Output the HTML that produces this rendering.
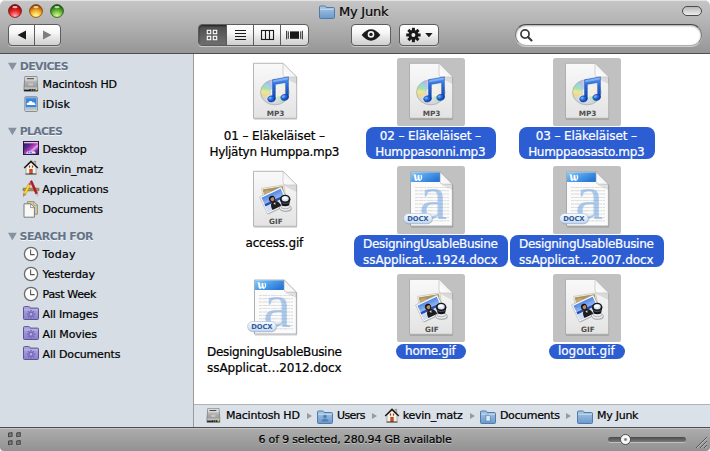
<!DOCTYPE html><html><head><meta charset="utf-8"><title>My Junk</title><style>

html,body{margin:0;padding:0;background:#fff;}
body{width:710px;height:451px;overflow:hidden;position:relative;font-family:"DejaVu Sans","Liberation Sans",sans-serif;color:#000;}
*{box-sizing:border-box;}
#win{position:absolute;left:0;top:0;width:710px;height:451px;overflow:hidden;border-radius:5px 5px 4px 4px;background:#fff;}
#tb{position:absolute;left:0;top:0;width:710px;height:54px;background:linear-gradient(#cbcbcb 0px,#c4c4c4 2px,#b4b4b4 22px,#969696 53px);border-bottom:1px solid #4e4e4e;box-shadow:inset 0 1px 0 #e2e2e2;border-radius:5px 5px 0 0;}
.tl{position:absolute;top:4px;width:14px;height:14px;}
#title{position:absolute;top:3px;-webkit-text-stroke:0.22px #000;left:338.9px;font-size:13px;line-height:18px;white-space:nowrap;text-shadow:0 1px 0 rgba(255,255,255,.45);}
#tfolder{position:absolute;left:319px;top:4px;}
.btn{position:absolute;top:24px;height:22px;border:1px solid #5c5c5c;border-radius:4px;background:linear-gradient(#ffffff 0%,#f6f6f6 40%,#e6e6e6 62%,#cfcfcf 100%);box-shadow:0 1px 0 rgba(255,255,255,.45);}
#loz{position:absolute;left:682px;top:6px;width:20px;height:10px;border:1px solid #4c4c4c;border-radius:5px;background:linear-gradient(#b8b8b8,#eeeeee);}
#search{position:absolute;left:515px;top:24px;width:187px;height:22px;border-radius:11px;background:#fff;border:1px solid #7c7c7c;border-top-color:#474747;border-bottom-color:#b0b0b0;box-shadow:inset 0 1px 2px rgba(0,0,0,.35),0 1px 0 rgba(255,255,255,.5);}
#side{position:absolute;left:0;top:54px;width:193px;height:373px;background:#d6dde5;}
#sdiv{position:absolute;left:193px;top:54px;width:1px;height:373px;background:#9a9a9a;}
.sh{position:absolute;margin-top:1px;left:20.5px;font-size:11px;font-weight:bold;color:#647387;line-height:14px;letter-spacing:-0.5px;text-shadow:0 1px 0 rgba(255,255,255,.7);white-space:nowrap;}
.tri{position:absolute;left:8px;}
.si{position:absolute;margin-top:1px;-webkit-text-stroke:0.22px #000;left:43.5px;font-size:11px;line-height:14px;letter-spacing:-0.25px;white-space:nowrap;}
.sic{position:absolute;}
#content{position:absolute;left:194px;top:54px;width:516px;height:350px;background:#fff;}
.big{position:absolute;}
.ext{font-family:"DejaVu Sans","Liberation Sans",sans-serif;font-weight:bold;font-size:7.3px;fill:#4e4e4e;}
.docx{font-family:"DejaVu Sans","Liberation Sans",sans-serif;font-weight:bold;font-size:6.8px;fill:#31599a;letter-spacing:-0.1px;}
.biga{font-family:"Liberation Serif","DejaVu Serif",serif;font-size:63px;fill:#9cc2ee;opacity:.85;}
.lab{position:absolute;width:200px;text-align:center;font-size:12px;line-height:16px;white-space:nowrap;}
.lab span{display:inline-block;padding:0 10.3px 0 8.9px;border-radius:8px;-webkit-text-stroke:0.22px currentColor;}
.lab b{font-weight:normal;display:block;position:relative;top:1px;height:16px;}
.lab.one span{margin-top:1px;}
.lab.one b{top:0;height:15px;line-height:15px;}
.lab.sel span{background:#2c5dd3;color:#fff;}
#path{position:absolute;left:194px;top:404px;width:516px;height:23px;background:#dbe1e8;border-top:1px solid #b4b4b4;}
.pt{position:absolute;top:409px;-webkit-text-stroke:0.22px #000;font-size:11px;line-height:14px;letter-spacing:-0.25px;white-space:nowrap;}
.pi{position:absolute;}
.pa{position:absolute;top:413px;width:0;height:0;border-left:5px solid #9a9a9a;border-top:3px solid transparent;border-bottom:3px solid transparent;}
#status{position:absolute;left:0;top:427px;width:710px;height:24px;background:linear-gradient(#adadad,#929292);border-top:1px solid #4e4e4e;box-shadow:inset 0 1px 0 #c4c4c4;}
#stxt{position:absolute;-webkit-text-stroke:0.2px #000;left:0;top:433px;width:710px;text-align:center;font-size:11px;line-height:14px;letter-spacing:-0.2px;text-shadow:0 1px 0 rgba(255,255,255,.4);white-space:nowrap;}

</style></head><body>

<svg width="0" height="0" style="position:absolute;left:0;top:0">
<defs>
<linearGradient id="gPage" x1="0" y1="0" x2="0" y2="1"><stop offset="0" stop-color="#f9f9f9"/><stop offset="1" stop-color="#e3e3e3"/></linearGradient>
<linearGradient id="gFoldc" x1="0" y1="1" x2="1" y2="0"><stop offset="0" stop-color="#ffffff"/><stop offset="0.5" stop-color="#f4f4f4"/><stop offset="1" stop-color="#c9c9c9"/></linearGradient>
<linearGradient id="gFolder" x1="0" y1="0" x2="0" y2="1"><stop offset="0" stop-color="#a9c7e5"/><stop offset="1" stop-color="#6a99ca"/></linearGradient>
<linearGradient id="gSmart" x1="0" y1="0" x2="0" y2="1"><stop offset="0" stop-color="#b0a9e0"/><stop offset="1" stop-color="#8a80c8"/></linearGradient>
<linearGradient id="gNote" x1="0" y1="0" x2="0" y2="1"><stop offset="0" stop-color="#5a9af4"/><stop offset="0.45" stop-color="#2468dc"/><stop offset="1" stop-color="#1248b4"/></linearGradient>
<linearGradient id="gHD" x1="0" y1="0" x2="0" y2="1"><stop offset="0" stop-color="#d8d8d8"/><stop offset="0.5" stop-color="#a9a9a9"/><stop offset="1" stop-color="#8c8c8c"/></linearGradient>
<linearGradient id="gDocHead" x1="0" y1="0" x2="1" y2="0.6"><stop offset="0" stop-color="#86ccf8"/><stop offset="0.5" stop-color="#4f9fea"/><stop offset="1" stop-color="#2a76d6"/></linearGradient>
<linearGradient id="gPill" x1="0" y1="0" x2="0" y2="1"><stop offset="0" stop-color="#ffffff"/><stop offset="1" stop-color="#c4d9f2"/></linearGradient>
<linearGradient id="gDesk" x1="0" y1="0" x2="1" y2="1"><stop offset="0" stop-color="#22164a"/><stop offset="0.34" stop-color="#5a2c8e"/><stop offset="0.54" stop-color="#c244c4"/><stop offset="0.63" stop-color="#f2a6ea"/><stop offset="0.76" stop-color="#7a3aa4"/><stop offset="1" stop-color="#2a1852"/></linearGradient>
<radialGradient id="gCD" cx="0.5" cy="0.5" r="0.5"><stop offset="0" stop-color="#f6f6f6"/><stop offset="0.3" stop-color="#e6e8ea"/><stop offset="1" stop-color="#cfd3d8"/></radialGradient>
<radialGradient id="gRed" cx="0.5" cy="0.92" r="0.85"><stop offset="0" stop-color="#ffc4c4"/><stop offset="0.22" stop-color="#fa7a7a"/><stop offset="0.55" stop-color="#e82424"/><stop offset="1" stop-color="#7e0c0c"/></radialGradient>
<radialGradient id="gYel" cx="0.5" cy="0.92" r="0.85"><stop offset="0" stop-color="#fff6a0"/><stop offset="0.25" stop-color="#fde56a"/><stop offset="0.6" stop-color="#f0a020"/><stop offset="1" stop-color="#8a4206"/></radialGradient>
<radialGradient id="gGrn" cx="0.5" cy="0.92" r="0.85"><stop offset="0" stop-color="#dcf8a6"/><stop offset="0.25" stop-color="#aee26a"/><stop offset="0.6" stop-color="#58ae34"/><stop offset="1" stop-color="#1c560e"/></radialGradient>
<radialGradient id="gHead" cx="0.35" cy="0.3" r="0.8"><stop offset="0" stop-color="#7fbcff"/><stop offset="0.45" stop-color="#1f66de"/><stop offset="1" stop-color="#0a3496"/></radialGradient>
<clipPath id="cdclip"><ellipse cx="33.8" cy="34.3" rx="14.3" ry="12.6"/></clipPath>
<filter id="blur1" x="-20%" y="-20%" width="140%" height="140%"><feGaussianBlur stdDeviation="0.9"/></filter>
<linearGradient id="gSky" x1="0" y1="0" x2="0" y2="1"><stop offset="0" stop-color="#4f86e4"/><stop offset="0.5" stop-color="#9dbdf2"/><stop offset="1" stop-color="#9dbdf2"/></linearGradient>
</defs></svg>

<div id="win">
<div id="tb"></div>
<svg class="tl" style="left:8px" width="14" height="14" viewBox="0 0 14 14"><circle cx="7" cy="7" r="6.4" fill="url(#gRed)" stroke="#7a1414" stroke-width="0.9"/><ellipse cx="7" cy="3.1" rx="2.6" ry="1.2" fill="#fff" opacity=".7"/></svg>
<svg class="tl" style="left:29px" width="14" height="14" viewBox="0 0 14 14"><circle cx="7" cy="7" r="6.4" fill="url(#gYel)" stroke="#8a4a0a" stroke-width="0.9"/><ellipse cx="7" cy="3.1" rx="2.6" ry="1.2" fill="#fff" opacity=".7"/></svg>
<svg class="tl" style="left:50px" width="14" height="14" viewBox="0 0 14 14"><circle cx="7" cy="7" r="6.4" fill="url(#gGrn)" stroke="#255c16" stroke-width="0.9"/><ellipse cx="7" cy="3.1" rx="2.6" ry="1.2" fill="#fff" opacity=".7"/></svg>
<div id="tfolder"><svg width="16" height="14" viewBox="0 0 16 14"><path d="M0.5 2 q0-1 1-1 h4.2 q0.8 0 1.1 0.7 l0.3 0.8 h7.4 q1 0 1 1 v9 q0 1-1 1 h-13 q-1 0-1-1z" fill="url(#gFolder)" stroke="#4f7cac" stroke-width="1"/><path d="M1.2 4.3 h13.6" stroke="#d3e4f4" stroke-width="0.8"/></svg></div>
<div id="title" style="letter-spacing:-0.215px">My Junk</div>
<div id="loz"></div>
<div class="btn" style="left:8px;width:53px"></div>
<div style="position:absolute;left:34px;top:25px;width:1px;height:20px;background:#5c5c5c"></div>
<svg style="position:absolute;left:8px;top:24px" width="53" height="22" viewBox="0 0 53 22"><path d="M9.5 11 L18 6.6 V15.4Z" fill="#1a1a1a"/><path d="M43.5 11 L35 6.6 V15.4Z" fill="#7e7e7e"/></svg>
<div class="btn" style="left:198px;width:111px"></div>
<div style="position:absolute;left:199px;top:25px;width:28px;height:20px;border-radius:3px 0 0 3px;background:linear-gradient(#4a4a4a,#636363 60%,#6e6e6e);box-shadow:inset 0 1px 2px rgba(0,0,0,.6)"></div>
<div style="position:absolute;left:226px;top:25px;width:1px;height:20px;background:#5c5c5c"></div>
<div style="position:absolute;left:253px;top:25px;width:1px;height:20px;background:#5c5c5c"></div>
<div style="position:absolute;left:280px;top:25px;width:1px;height:20px;background:#5c5c5c"></div>
<svg style="position:absolute;left:198px;top:24px" width="111" height="22" viewBox="0 0 111 22"><g fill="none" stroke="#fff" stroke-width="1.1"><rect x="9.3" y="6.3" width="3.4" height="3.4"/><rect x="15.3" y="6.3" width="3.4" height="3.4"/><rect x="9.3" y="12.3" width="3.4" height="3.4"/><rect x="15.3" y="12.3" width="3.4" height="3.4"/></g><g stroke="#1a1a1a" stroke-width="1.1"><path d="M37 6.5 h11 M37 9.5 h11 M37 12.5 h11 M37 15.5 h11"/></g><g fill="none" stroke="#1a1a1a" stroke-width="1.1"><rect x="63.5" y="6.5" width="12" height="9"/><path d="M67.5 6.5 v9 M71.5 6.5 v9"/></g><g><rect x="92" y="7.4" width="9" height="7.4" fill="#1a1a1a"/><path d="M88.6 6.8 v8.6 M90.3 7.4 v7.4 M102.7 7.4 v7.4 M104.4 6.8 v8.6" stroke="#1a1a1a" stroke-width="0.9"/></g></svg>
<div class="btn" style="left:351px;width:40px"></div>
<svg style="position:absolute;left:351px;top:24px" width="40" height="22" viewBox="0 0 40 22"><path d="M10.6 11 Q20 -0.4 29.4 11 Q20 22.4 10.6 11Z" fill="#1a1a1a"/><circle cx="20" cy="10.4" r="3.3" fill="#f2f2f2"/><circle cx="20" cy="10.4" r="1.7" fill="#1a1a1a"/></svg>
<div class="btn" style="left:399px;width:40px"></div>
<svg style="position:absolute;left:399px;top:24px" width="40" height="22" viewBox="0 0 40 22"><g transform="translate(14.4 11)"><rect x="-1.5" y="-7.2" width="3" height="3.4" fill="#1a1a1a" transform="rotate(0)"/><rect x="-1.5" y="-7.2" width="3" height="3.4" fill="#1a1a1a" transform="rotate(45)"/><rect x="-1.5" y="-7.2" width="3" height="3.4" fill="#1a1a1a" transform="rotate(90)"/><rect x="-1.5" y="-7.2" width="3" height="3.4" fill="#1a1a1a" transform="rotate(135)"/><rect x="-1.5" y="-7.2" width="3" height="3.4" fill="#1a1a1a" transform="rotate(180)"/><rect x="-1.5" y="-7.2" width="3" height="3.4" fill="#1a1a1a" transform="rotate(225)"/><rect x="-1.5" y="-7.2" width="3" height="3.4" fill="#1a1a1a" transform="rotate(270)"/><rect x="-1.5" y="-7.2" width="3" height="3.4" fill="#1a1a1a" transform="rotate(315)"/><circle r="4.9" fill="#1a1a1a"/><circle r="2" fill="#f0f0f0"/></g><path d="M26.2 9 h7.4 l-3.7 4.2z" fill="#1a1a1a"/></svg>
<div id="search"></div>
<svg style="position:absolute;left:520px;top:28px" width="16" height="16" viewBox="0 0 16 16"><circle cx="5" cy="6" r="4.05" fill="none" stroke="#3a3a3a" stroke-width="1.7"/><path d="M8 9 L11.5 12.5" stroke="#3a3a3a" stroke-width="2.1" stroke-linecap="round"/></svg>
<div id="side"></div><div id="sdiv"></div>
<svg class="tri" style="top:62px" width="10" height="9" viewBox="0 0 10 9"><path d="M0 0.8 H8.8 L4.4 8.3Z" fill="#8792a0"/></svg>
<div class="sh" style="top:59px;left:19.7px;letter-spacing:-0.628px">DEVICES</div>
<div class="sic" style="left:23.0px;top:75.5px"><svg width="16" height="16" viewBox="0 0 16 16"><path d="M1.9 0.5 H13.9 L14.7 11.4 V15.2 H1 V11.4Z" fill="url(#gHD)" stroke="#707070" stroke-width="0.7"/><path d="M2.3 0.9 H13.5 L13.8 4.6 H2Z" fill="#dcdcdc" opacity=".85"/><rect x="3.8" y="2.3" width="7.2" height="0.9" fill="#2e2e2e"/><ellipse cx="7.8" cy="8.4" rx="2.6" ry="1.2" fill="#cfcfcf" opacity=".8"/><path d="M1.4 11.3 H14.3 V13.2 H1.4Z" fill="#c4c4c4" opacity=".9"/><rect x="1.2" y="13.2" width="13.3" height="1.9" fill="#1c1c1c"/><rect x="1.4" y="13.2" width="4.8" height="0.8" fill="#9a9a9a"/><rect x="8" y="13.3" width="0.6" height="1.6" fill="#b8b8b8"/><rect x="9.9" y="13.3" width="0.6" height="1.6" fill="#b8b8b8"/><rect x="11.8" y="13.3" width="0.6" height="1.6" fill="#b8b8b8"/><rect x="12.7" y="12.9" width="1.5" height="1.5" fill="#f6ea1c"/></svg></div>
<div class="si" style="top:77px;left:42.6px;letter-spacing:-0.172px">Macintosh HD</div>
<div class="sic" style="left:23.0px;top:96.0px"><svg width="16" height="16" viewBox="0 0 16 16"><rect x="1.9" y="0.8" width="12.4" height="14.6" rx="0.8" fill="#dfe3e8" stroke="#6f7b8a" stroke-width="0.9"/><rect x="2.7" y="1.6" width="10.8" height="9.9" fill="#3c84d8"/><rect x="2.7" y="1.6" width="10.8" height="1" fill="#6aa6ea"/><path d="M4.6 8.9 q-1.2-0.2-0.9-1.4 q0.4-1 1.6-0.8 q0.4-1.6 2.2-1.6 q1.6 0 2.2 1.3 q0.8-0.5 1.6 0.1 q0.5 0.5 0.3 1.1 q1 0.1 0.9 0.8 q-0.1 0.6-1 0.6z" fill="#fff"/><rect x="2.4" y="11.8" width="11.4" height="3.2" fill="#d0d5da"/><rect x="2.4" y="12.7" width="11.4" height="0.6" fill="#8f98a2"/><rect x="10.8" y="13.5" width="1.4" height="1.2" fill="#f4e61c"/></svg></div>
<div class="si" style="top:97px;left:42.6px;letter-spacing:0.128px">iDisk</div>
<svg class="tri" style="top:127px" width="10" height="9" viewBox="0 0 10 9"><path d="M0 0.8 H8.8 L4.4 8.3Z" fill="#8792a0"/></svg>
<div class="sh" style="top:124px;left:19.7px;letter-spacing:-0.779px">PLACES</div>
<div class="sic" style="left:23.0px;top:140.0px"><svg width="16" height="14" viewBox="0 0 16 14"><rect x="0.5" y="0.5" width="15" height="13" fill="url(#gDesk)" stroke="#2a1840" stroke-width="1"/><rect x="1" y="1" width="14" height="1.3" fill="#e8c6e8"/><path d="M3 12.6 l1.2-2 h7.6 l1.2 2z" fill="#f2f2f8"/><circle cx="5.6" cy="11.4" r="0.9" fill="#2f7fe6"/><circle cx="8" cy="11.4" r="0.9" fill="#2f7fe6"/><circle cx="10.4" cy="11.4" r="0.9" fill="#dfe6ee"/></svg></div>
<div class="si" style="top:142px;left:42.6px;letter-spacing:-0.196px">Desktop</div>
<div class="sic" style="left:23.0px;top:159.8px"><svg width="16" height="15" viewBox="0 0 16 15"><rect x="11" y="1.2" width="1.8" height="4.5" fill="#e8e2d2" stroke="#6d665a" stroke-width="0.5"/><path d="M3 7 L8 2.2 L13 7 V13.8 H3z" fill="#f6f2e6" stroke="#8a8476" stroke-width="0.6"/><path d="M1.2 8 L8 1.4 L14.8 8" fill="none" stroke="#1c1c1c" stroke-width="1.5" stroke-linejoin="miter"/><rect x="5.9" y="5.6" width="1.2" height="2" fill="#9a2a1a"/><rect x="8.9" y="5.6" width="1.2" height="2" fill="#9a2a1a"/><rect x="6.8" y="9.2" width="2.4" height="4.6" fill="#e8491a" stroke="#7a200a" stroke-width="0.5"/><rect x="2.4" y="13.6" width="11.2" height="0.9" fill="#3a3a3a"/></svg></div>
<div class="si" style="top:162px;left:42.6px;letter-spacing:-0.170px">kevin_matz</div>
<div class="sic" style="left:22.4px;top:180.2px"><svg width="18" height="17" viewBox="0 0 18 17"><rect x="1" y="8.2" width="16" height="2.6" rx="0.4" fill="#b58a52" stroke="#7d5a2c" stroke-width="0.6"/><path d="M8.2 1.6 L9.9 0.6 L15.6 13.4 L13.9 14.2z" fill="#c2182a" stroke="#7c0c18" stroke-width="0.5"/><path d="M13.9 14.2 L15.6 13.4 L16 16.2z" fill="#f0e6da" stroke="#9a8a7a" stroke-width="0.4"/><path d="M6.2 4.2 L8.4 5.2 L3.6 14.6 L1.6 13.6z" fill="#f4e22c" stroke="#a68a0c" stroke-width="0.5"/><path d="M6.2 4.2 L7 2.8 Q8 2.2 8.8 3 Q9.2 3.8 8.4 5.2z" fill="#f23a6a"/><path d="M1.6 13.6 L3.6 14.6 L1.4 16.4z" fill="#d8b080" stroke="#6a4a2a" stroke-width="0.4"/></svg></div>
<div class="si" style="top:182px;left:42.3px;letter-spacing:-0.082px">Applications</div>
<div class="sic" style="left:23.4px;top:201.0px"><svg width="16" height="17" viewBox="0 0 16 17"><path d="M4.4 0.6 h6.4 l3.6 3.6 v9 h-10z" fill="#d2caa2" stroke="#8a8462" stroke-width="0.8"/><path d="M10.8 0.6 v3.6 h3.6z" fill="#ece6c6" stroke="#8a8462" stroke-width="0.6"/><path d="M1 2.8 h6.6 l3.8 3.8 v9.6 h-10.4z" fill="#f8f8f6" stroke="#727272" stroke-width="0.9"/><path d="M7.6 2.8 v3.8 h3.8z" fill="#ffffff" stroke="#727272" stroke-width="0.7"/></svg></div>
<div class="si" style="top:202px;left:42.6px;letter-spacing:-0.277px">Documents</div>
<svg class="tri" style="top:232px" width="10" height="9" viewBox="0 0 10 9"><path d="M0 0.8 H8.8 L4.4 8.3Z" fill="#8792a0"/></svg>
<div class="sh" style="top:229px;left:19.5px;letter-spacing:-0.542px">SEARCH FOR</div>
<div class="sic" style="left:23.0px;top:245.5px"><svg width="16" height="16" viewBox="0 0 16 16"><circle cx="8" cy="8" r="6.6" fill="#fdfdfd" stroke="#6a6a6a" stroke-width="1.3"/><path d="M7.6 3.6 V8.6 H11.6" fill="none" stroke="#5a5a5a" stroke-width="1.1"/></svg></div>
<div class="si" style="top:247px;left:42.6px;letter-spacing:0.293px">Today</div>
<div class="sic" style="left:23.0px;top:265.5px"><svg width="16" height="16" viewBox="0 0 16 16"><circle cx="8" cy="8" r="6.6" fill="#fdfdfd" stroke="#6a6a6a" stroke-width="1.3"/><path d="M7.6 3.6 V8.6 H11.6" fill="none" stroke="#5a5a5a" stroke-width="1.1"/></svg></div>
<div class="si" style="top:267px;left:42.6px;letter-spacing:-0.138px">Yesterday</div>
<div class="sic" style="left:23.0px;top:285.5px"><svg width="16" height="16" viewBox="0 0 16 16"><circle cx="8" cy="8" r="6.6" fill="#fdfdfd" stroke="#6a6a6a" stroke-width="1.3"/><path d="M7.6 3.6 V8.6 H11.6" fill="none" stroke="#5a5a5a" stroke-width="1.1"/></svg></div>
<div class="si" style="top:287px;left:42.6px;letter-spacing:-0.345px">Past Week</div>
<div class="sic" style="left:23.0px;top:305.0px"><svg width="16" height="14" viewBox="0 0 16 14"><path d="M0.5 1.6 q0-1 1-1 h4.2 q0.8 0 1.1 0.7 l0.3 0.8 h7.4 q1 0 1 1 v9.4 q0 1-1 1 h-13 q-1 0-1-1z" fill="url(#gSmart)" stroke="#5d5397" stroke-width="1"/><path d="M1.2 3.9 h13.6" stroke="#c6c1ea" stroke-width="0.8"/><rect x="7.3" y="3.9" width="1.4" height="1.6" fill="#766bbb" transform="rotate(0 8 8.2)"/><rect x="7.3" y="3.9" width="1.4" height="1.6" fill="#766bbb" transform="rotate(45 8 8.2)"/><rect x="7.3" y="3.9" width="1.4" height="1.6" fill="#766bbb" transform="rotate(90 8 8.2)"/><rect x="7.3" y="3.9" width="1.4" height="1.6" fill="#766bbb" transform="rotate(135 8 8.2)"/><rect x="7.3" y="3.9" width="1.4" height="1.6" fill="#766bbb" transform="rotate(180 8 8.2)"/><rect x="7.3" y="3.9" width="1.4" height="1.6" fill="#766bbb" transform="rotate(225 8 8.2)"/><rect x="7.3" y="3.9" width="1.4" height="1.6" fill="#766bbb" transform="rotate(270 8 8.2)"/><rect x="7.3" y="3.9" width="1.4" height="1.6" fill="#766bbb" transform="rotate(315 8 8.2)"/><circle cx="8" cy="8.2" r="2.7" fill="#766bbb"/><circle cx="8" cy="8.2" r="1.2" fill="#b9b3e4"/></svg></div>
<div class="si" style="top:307px;left:42.6px;letter-spacing:-0.192px">All Images</div>
<div class="sic" style="left:23.0px;top:325.0px"><svg width="16" height="14" viewBox="0 0 16 14"><path d="M0.5 1.6 q0-1 1-1 h4.2 q0.8 0 1.1 0.7 l0.3 0.8 h7.4 q1 0 1 1 v9.4 q0 1-1 1 h-13 q-1 0-1-1z" fill="url(#gSmart)" stroke="#5d5397" stroke-width="1"/><path d="M1.2 3.9 h13.6" stroke="#c6c1ea" stroke-width="0.8"/><rect x="7.3" y="3.9" width="1.4" height="1.6" fill="#766bbb" transform="rotate(0 8 8.2)"/><rect x="7.3" y="3.9" width="1.4" height="1.6" fill="#766bbb" transform="rotate(45 8 8.2)"/><rect x="7.3" y="3.9" width="1.4" height="1.6" fill="#766bbb" transform="rotate(90 8 8.2)"/><rect x="7.3" y="3.9" width="1.4" height="1.6" fill="#766bbb" transform="rotate(135 8 8.2)"/><rect x="7.3" y="3.9" width="1.4" height="1.6" fill="#766bbb" transform="rotate(180 8 8.2)"/><rect x="7.3" y="3.9" width="1.4" height="1.6" fill="#766bbb" transform="rotate(225 8 8.2)"/><rect x="7.3" y="3.9" width="1.4" height="1.6" fill="#766bbb" transform="rotate(270 8 8.2)"/><rect x="7.3" y="3.9" width="1.4" height="1.6" fill="#766bbb" transform="rotate(315 8 8.2)"/><circle cx="8" cy="8.2" r="2.7" fill="#766bbb"/><circle cx="8" cy="8.2" r="1.2" fill="#b9b3e4"/></svg></div>
<div class="si" style="top:327px;left:42.6px;letter-spacing:-0.114px">All Movies</div>
<div class="sic" style="left:23.0px;top:345.0px"><svg width="16" height="14" viewBox="0 0 16 14"><path d="M0.5 1.6 q0-1 1-1 h4.2 q0.8 0 1.1 0.7 l0.3 0.8 h7.4 q1 0 1 1 v9.4 q0 1-1 1 h-13 q-1 0-1-1z" fill="url(#gSmart)" stroke="#5d5397" stroke-width="1"/><path d="M1.2 3.9 h13.6" stroke="#c6c1ea" stroke-width="0.8"/><rect x="7.3" y="3.9" width="1.4" height="1.6" fill="#766bbb" transform="rotate(0 8 8.2)"/><rect x="7.3" y="3.9" width="1.4" height="1.6" fill="#766bbb" transform="rotate(45 8 8.2)"/><rect x="7.3" y="3.9" width="1.4" height="1.6" fill="#766bbb" transform="rotate(90 8 8.2)"/><rect x="7.3" y="3.9" width="1.4" height="1.6" fill="#766bbb" transform="rotate(135 8 8.2)"/><rect x="7.3" y="3.9" width="1.4" height="1.6" fill="#766bbb" transform="rotate(180 8 8.2)"/><rect x="7.3" y="3.9" width="1.4" height="1.6" fill="#766bbb" transform="rotate(225 8 8.2)"/><rect x="7.3" y="3.9" width="1.4" height="1.6" fill="#766bbb" transform="rotate(270 8 8.2)"/><rect x="7.3" y="3.9" width="1.4" height="1.6" fill="#766bbb" transform="rotate(315 8 8.2)"/><circle cx="8" cy="8.2" r="2.7" fill="#766bbb"/><circle cx="8" cy="8.2" r="1.2" fill="#b9b3e4"/></svg></div>
<div class="si" style="top:347px;left:42.6px;letter-spacing:-0.172px">All Documents</div>
<div id="content"></div>
<svg class="big" style="left:241px;top:58px" width="68" height="68" viewBox="0 0 68 68"><path d="M13 60.6 h43 v1.2 h-43z" fill="#000" opacity=".18"/><path d="M12.5 5.3 H42 L55.7 19 V60.3 H12.5Z" fill="url(#gPage)" stroke="#a4a4a4" stroke-width="0.8"/><path d="M42 19.6 L55.7 19 L55.7 26 Z" fill="#000" opacity=".10"/><path d="M42 5.3 V16 Q42 19 45 19 H55.7 Z" fill="url(#gFoldc)" stroke="#b8b8b8" stroke-width="0.6"/><g clip-path="url(#cdclip)"><ellipse cx="33.8" cy="34.3" rx="14.3" ry="12.6" fill="url(#gCD)"/><g filter="url(#blur1)"><path d="M33 34.2 L19 41 L18 36z" fill="#f6d66a" opacity=".72"/><path d="M33 34.2 L18 36 L18.6 30.6z" fill="#f2ee7a" opacity=".72"/><path d="M33 34.2 L18.6 30.6 L21 26z" fill="#8fe08a" opacity=".72"/><path d="M33 34.2 L21 26 L24.6 22.4z" fill="#7ad8e8" opacity=".72"/><path d="M33 34.2 L24.6 22.4 L29 20.4z" fill="#a8a6f0" opacity=".7"/><path d="M33 34.2 L47 28 L48 33z" fill="#f6d66a" opacity=".55"/><path d="M33 34.2 L48 33 L47.4 38z" fill="#f2b6d2" opacity=".7"/><path d="M33 34.2 L47.4 38 L45 42.6z" fill="#f4ee8a" opacity=".7"/><path d="M33 34.2 L45 42.6 L41 46z" fill="#9fe6b0" opacity=".6"/></g></g><ellipse cx="33.8" cy="34.3" rx="14.3" ry="12.6" fill="none" stroke="#a4a8ae" stroke-width="0.7"/><circle cx="33" cy="34.2" r="4.1" fill="#e9ebee" stroke="#b4b8bc" stroke-width="0.5"/><circle cx="33" cy="34.2" r="1.7" fill="#fbfbfb" stroke="#a0a4a8" stroke-width="0.45"/><path d="M34.3 26.6 L44.7 24.7 V37 L34.3 39Z" fill="#ffffff" opacity=".55"/><path d="M31.6 21.7 L47.4 18.8 V39.3 H44.7 V24.4 L34.3 26.3 V40.8 H31.6Z" fill="url(#gNote)" stroke="#0f3c9c" stroke-width="0.45" stroke-linejoin="round"/><path d="M32.2 22.3 L46.8 19.6 V21.6 L32.2 24.3Z" fill="#9ccaff" opacity=".6"/><ellipse cx="30.5" cy="40.9" rx="3.8" ry="3.05" transform="rotate(-14 30.5 40.9)" fill="url(#gHead)" stroke="#0b3590" stroke-width="0.5"/><ellipse cx="43.6" cy="39.4" rx="3.8" ry="3.05" transform="rotate(-14 43.6 39.4)" fill="url(#gHead)" stroke="#0b3590" stroke-width="0.5"/><text x="34.6" y="57.7" text-anchor="middle" class="ext">MP3</text></svg>
<div class="lab" style="left:175px;top:127px"><span><b style="letter-spacing:-0.115px">01 – Eläkeläiset –</b><b style="letter-spacing:-0.280px">Hyljätyn Humppa.mp3</b></span></div>
<svg class="big" style="left:397px;top:58px" width="68" height="68" viewBox="0 0 68 68"><rect x="0" y="0" width="68" height="68" rx="2.6" fill="#c1c1c1"/><path d="M13 60.6 h43 v1.2 h-43z" fill="#000" opacity=".18"/><path d="M12.5 5.3 H42 L55.7 19 V60.3 H12.5Z" fill="url(#gPage)" stroke="#a4a4a4" stroke-width="0.8"/><path d="M42 19.6 L55.7 19 L55.7 26 Z" fill="#000" opacity=".10"/><path d="M42 5.3 V16 Q42 19 45 19 H55.7 Z" fill="url(#gFoldc)" stroke="#b8b8b8" stroke-width="0.6"/><g clip-path="url(#cdclip)"><ellipse cx="33.8" cy="34.3" rx="14.3" ry="12.6" fill="url(#gCD)"/><g filter="url(#blur1)"><path d="M33 34.2 L19 41 L18 36z" fill="#f6d66a" opacity=".72"/><path d="M33 34.2 L18 36 L18.6 30.6z" fill="#f2ee7a" opacity=".72"/><path d="M33 34.2 L18.6 30.6 L21 26z" fill="#8fe08a" opacity=".72"/><path d="M33 34.2 L21 26 L24.6 22.4z" fill="#7ad8e8" opacity=".72"/><path d="M33 34.2 L24.6 22.4 L29 20.4z" fill="#a8a6f0" opacity=".7"/><path d="M33 34.2 L47 28 L48 33z" fill="#f6d66a" opacity=".55"/><path d="M33 34.2 L48 33 L47.4 38z" fill="#f2b6d2" opacity=".7"/><path d="M33 34.2 L47.4 38 L45 42.6z" fill="#f4ee8a" opacity=".7"/><path d="M33 34.2 L45 42.6 L41 46z" fill="#9fe6b0" opacity=".6"/></g></g><ellipse cx="33.8" cy="34.3" rx="14.3" ry="12.6" fill="none" stroke="#a4a8ae" stroke-width="0.7"/><circle cx="33" cy="34.2" r="4.1" fill="#e9ebee" stroke="#b4b8bc" stroke-width="0.5"/><circle cx="33" cy="34.2" r="1.7" fill="#fbfbfb" stroke="#a0a4a8" stroke-width="0.45"/><path d="M34.3 26.6 L44.7 24.7 V37 L34.3 39Z" fill="#ffffff" opacity=".55"/><path d="M31.6 21.7 L47.4 18.8 V39.3 H44.7 V24.4 L34.3 26.3 V40.8 H31.6Z" fill="url(#gNote)" stroke="#0f3c9c" stroke-width="0.45" stroke-linejoin="round"/><path d="M32.2 22.3 L46.8 19.6 V21.6 L32.2 24.3Z" fill="#9ccaff" opacity=".6"/><ellipse cx="30.5" cy="40.9" rx="3.8" ry="3.05" transform="rotate(-14 30.5 40.9)" fill="url(#gHead)" stroke="#0b3590" stroke-width="0.5"/><ellipse cx="43.6" cy="39.4" rx="3.8" ry="3.05" transform="rotate(-14 43.6 39.4)" fill="url(#gHead)" stroke="#0b3590" stroke-width="0.5"/><text x="34.6" y="57.7" text-anchor="middle" class="ext">MP3</text></svg>
<div class="lab sel" style="left:331px;top:127px"><span><b style="letter-spacing:-0.115px">02 – Eläkeläiset –</b><b style="letter-spacing:-0.244px">Humppasonni.mp3</b></span></div>
<svg class="big" style="left:553px;top:58px" width="68" height="68" viewBox="0 0 68 68"><rect x="0" y="0" width="68" height="68" rx="2.6" fill="#c1c1c1"/><path d="M13 60.6 h43 v1.2 h-43z" fill="#000" opacity=".18"/><path d="M12.5 5.3 H42 L55.7 19 V60.3 H12.5Z" fill="url(#gPage)" stroke="#a4a4a4" stroke-width="0.8"/><path d="M42 19.6 L55.7 19 L55.7 26 Z" fill="#000" opacity=".10"/><path d="M42 5.3 V16 Q42 19 45 19 H55.7 Z" fill="url(#gFoldc)" stroke="#b8b8b8" stroke-width="0.6"/><g clip-path="url(#cdclip)"><ellipse cx="33.8" cy="34.3" rx="14.3" ry="12.6" fill="url(#gCD)"/><g filter="url(#blur1)"><path d="M33 34.2 L19 41 L18 36z" fill="#f6d66a" opacity=".72"/><path d="M33 34.2 L18 36 L18.6 30.6z" fill="#f2ee7a" opacity=".72"/><path d="M33 34.2 L18.6 30.6 L21 26z" fill="#8fe08a" opacity=".72"/><path d="M33 34.2 L21 26 L24.6 22.4z" fill="#7ad8e8" opacity=".72"/><path d="M33 34.2 L24.6 22.4 L29 20.4z" fill="#a8a6f0" opacity=".7"/><path d="M33 34.2 L47 28 L48 33z" fill="#f6d66a" opacity=".55"/><path d="M33 34.2 L48 33 L47.4 38z" fill="#f2b6d2" opacity=".7"/><path d="M33 34.2 L47.4 38 L45 42.6z" fill="#f4ee8a" opacity=".7"/><path d="M33 34.2 L45 42.6 L41 46z" fill="#9fe6b0" opacity=".6"/></g></g><ellipse cx="33.8" cy="34.3" rx="14.3" ry="12.6" fill="none" stroke="#a4a8ae" stroke-width="0.7"/><circle cx="33" cy="34.2" r="4.1" fill="#e9ebee" stroke="#b4b8bc" stroke-width="0.5"/><circle cx="33" cy="34.2" r="1.7" fill="#fbfbfb" stroke="#a0a4a8" stroke-width="0.45"/><path d="M34.3 26.6 L44.7 24.7 V37 L34.3 39Z" fill="#ffffff" opacity=".55"/><path d="M31.6 21.7 L47.4 18.8 V39.3 H44.7 V24.4 L34.3 26.3 V40.8 H31.6Z" fill="url(#gNote)" stroke="#0f3c9c" stroke-width="0.45" stroke-linejoin="round"/><path d="M32.2 22.3 L46.8 19.6 V21.6 L32.2 24.3Z" fill="#9ccaff" opacity=".6"/><ellipse cx="30.5" cy="40.9" rx="3.8" ry="3.05" transform="rotate(-14 30.5 40.9)" fill="url(#gHead)" stroke="#0b3590" stroke-width="0.5"/><ellipse cx="43.6" cy="39.4" rx="3.8" ry="3.05" transform="rotate(-14 43.6 39.4)" fill="url(#gHead)" stroke="#0b3590" stroke-width="0.5"/><text x="34.6" y="57.7" text-anchor="middle" class="ext">MP3</text></svg>
<div class="lab sel" style="left:487px;top:127px"><span><b style="letter-spacing:-0.115px">03 – Eläkeläiset –</b><b style="letter-spacing:-0.274px">Humppaosasto.mp3</b></span></div>
<svg class="big" style="left:241px;top:166px" width="68" height="68" viewBox="0 0 68 68"><path d="M13 60.6 h43 v1.2 h-43z" fill="#000" opacity=".18"/><path d="M12.5 5.3 H42 L55.7 19 V60.3 H12.5Z" fill="url(#gPage)" stroke="#a4a4a4" stroke-width="0.8"/><path d="M42 19.6 L55.7 19 L55.7 26 Z" fill="#000" opacity=".10"/><path d="M42 5.3 V16 Q42 19 45 19 H55.7 Z" fill="url(#gFoldc)" stroke="#b8b8b8" stroke-width="0.6"/><g transform="translate(20.6 22.4) rotate(-9)"><rect x="0" y="0" width="22.5" height="15" fill="#f6f1e4" stroke="#b9b2a0" stroke-width="0.5"/><rect x="1.2" y="1.2" width="20.1" height="12.6" fill="#c4a874"/><path d="M1.2 4 q4-2.6 8 0.4 q4 2 7-1 q3-1.4 5.1 0.6 v-2.8 h-20.1z" fill="#a88c58" opacity=".8"/></g><g transform="translate(18.6 31) rotate(-25)"><rect x="0.5" y="0.9" width="24" height="18.6" fill="#000" opacity=".22"/><rect x="0" y="0" width="24" height="18.6" fill="#fdfdfd" stroke="#a2a6ac" stroke-width="0.5"/><rect x="1.4" y="1.4" width="21.2" height="15.8" fill="url(#gSky)"/><rect x="1.4" y="8.6" width="21.2" height="2.4" fill="#2a4cac"/><rect x="1.4" y="11" width="21.2" height="6.2" fill="#cfdcf4"/><path d="M6.2 17.2 q-0.4-5.4 2.6-7 q-1.8-1-1.6-3.4 q0.4-3 3.4-3 q3 0.2 3 3.4 q0 2-1.4 3 q3.6 1.4 3.8 7z" fill="#1e1c1e"/><ellipse cx="10.7" cy="7.2" rx="1.9" ry="2.1" fill="#b98a68"/><path d="M8.4 6.4 q0.4-2.6 2.6-2.4 q2.2 0.2 2.2 2.6 q-1.2-1.4-2.4-1 q-1.4 0-2.4 0.8z" fill="#16120e"/><path d="M9.8 11.4 l1 2.6 l1.4-2.6z" fill="#d8d4d0"/></g><ellipse cx="45" cy="43.6" rx="6" ry="2.2" fill="#000" opacity=".18"/><ellipse cx="44.4" cy="42" rx="5.9" ry="3.1" fill="#f0f2f4" stroke="#808488" stroke-width="0.6"/><ellipse cx="44.4" cy="41.2" rx="4.4" ry="2.1" fill="#b4b8bc"/><ellipse cx="44.4" cy="40.6" rx="3.9" ry="1.7" fill="#e6e8ea"/><path d="M39.2 33.6 L40.5 38.6 a3.8 1.6 0 0 0 7.6 0 L49.3 33.6z" fill="#121212"/><ellipse cx="44.2" cy="33.3" rx="5.2" ry="4.5" fill="#181818"/><ellipse cx="44.2" cy="32.7" rx="3.5" ry="2.7" fill="#dce5f6"/><ellipse cx="43.7" cy="32.1" rx="2.2" ry="1.4" fill="#ffffff" opacity=".9"/><path d="M40.4 36.6 q3.8 2.2 7.8 0" stroke="#6a6e74" stroke-width="0.7" fill="none"/><text x="34.8" y="57.7" text-anchor="middle" class="ext">GIF</text></svg>
<div class="lab one" style="left:175px;top:235px"><span><b style="letter-spacing:-0.182px">access.gif</b></span></div>
<svg class="big" style="left:397px;top:166px" width="68" height="68" viewBox="0 0 68 68"><rect x="0" y="0" width="68" height="68" rx="2.6" fill="#c1c1c1"/><path d="M14 60.4 h42 v1.2 h-42z" fill="#000" opacity=".2"/><path d="M55.4 19 h1 v41.8 h-1z" fill="#000" opacity=".12"/><path d="M13.5 6 H43.2 L55.4 18.2 V60 H13.5Z" fill="#fbfbfb" stroke="#979da4" stroke-width="0.8"/><path d="M13.9 6.4 H43 V16 H13.9Z" fill="url(#gDocHead)"/><text x="36.2" y="53" text-anchor="middle" class="biga">a</text><path d="M18 21.3 H52" stroke="#9c9c9c" stroke-width="0.6" stroke-dasharray="3 0.6 5 0.5 2 0.7 6 0.4 1.5 0.5" opacity=".62"/><path d="M18 24.7 H52" stroke="#9c9c9c" stroke-width="0.6" stroke-dasharray="3 0.6 5 0.5 2 0.7 6 0.4 1.5 0.5" opacity=".62"/><path d="M18 28.0 H52" stroke="#9c9c9c" stroke-width="0.6" stroke-dasharray="3 0.6 5 0.5 2 0.7 6 0.4 1.5 0.5" opacity=".62"/><path d="M18 31.4 H52" stroke="#9c9c9c" stroke-width="0.6" stroke-dasharray="3 0.6 5 0.5 2 0.7 6 0.4 1.5 0.5" opacity=".62"/><path d="M18 34.7 H52" stroke="#9c9c9c" stroke-width="0.6" stroke-dasharray="3 0.6 5 0.5 2 0.7 6 0.4 1.5 0.5" opacity=".62"/><path d="M18 38.0 H52" stroke="#9c9c9c" stroke-width="0.6" stroke-dasharray="3 0.6 5 0.5 2 0.7 6 0.4 1.5 0.5" opacity=".62"/><path d="M18 41.4 H52" stroke="#9c9c9c" stroke-width="0.6" stroke-dasharray="3 0.6 5 0.5 2 0.7 6 0.4 1.5 0.5" opacity=".62"/><path d="M18 44.8 H52" stroke="#9c9c9c" stroke-width="0.6" stroke-dasharray="3 0.6 5 0.5 2 0.7 6 0.4 1.5 0.5" opacity=".62"/><path d="M18 48.1 H52" stroke="#9c9c9c" stroke-width="0.6" stroke-dasharray="3 0.6 5 0.5 2 0.7 6 0.4 1.5 0.5" opacity=".62"/><path d="M18 51.5 H52" stroke="#9c9c9c" stroke-width="0.6" stroke-dasharray="3 0.6 5 0.5 2 0.7 6 0.4 1.5 0.5" opacity=".62"/><path d="M18 54.8 H52" stroke="#9c9c9c" stroke-width="0.6" stroke-dasharray="3 0.6 5 0.5 2 0.7 6 0.4 1.5 0.5" opacity=".62"/><path d="M43.2 6 V15.4 Q43.2 18.2 46 18.2 H55.4 Z" fill="url(#gFoldc)" stroke="#a9aeb4" stroke-width="0.6"/><path d="M43.6 18.8 L55.4 18.2 L55.4 24 Z" fill="#000" opacity=".10"/><path transform="translate(-1.6 -0.6) scale(1.04 1.08)" d="M17.6 8.4 q1.6-0.6 2.2 0.6 l0.6 3.6 q0.2 0.8 0.8 0.2 l0.2-4 h1.6 l0.4 3.8 q0.2 0.8 0.8 0.2 q0.9-1.8-0.2-4.2 q1.8 0 1.8 2 q0 3.4-2.6 3.8 q-1.2 0-1.5-1 q-0.6 1-1.8 1 q-1.2-0.1-1.4-1.4 l-0.5-3.4 q-0.1-0.8-0.9-0.7z" fill="#fff"/><rect x="6.6" y="47.6" width="28.6" height="9.8" rx="4.9" fill="#000" opacity=".22" transform="translate(0.4 0.9)"/><rect x="6.6" y="47.6" width="28.6" height="9.8" rx="4.9" fill="url(#gPill)" stroke="#9fb6d2" stroke-width="0.6"/><text x="20.9" y="55.2" text-anchor="middle" class="docx">DOCX</text></svg>
<div class="lab sel" style="left:331px;top:235px"><span><b style="letter-spacing:-0.321px">DesigningUsableBusine</b><b style="letter-spacing:-0.095px">ssApplicat…1924.docx</b></span></div>
<svg class="big" style="left:553px;top:166px" width="68" height="68" viewBox="0 0 68 68"><rect x="0" y="0" width="68" height="68" rx="2.6" fill="#c1c1c1"/><path d="M14 60.4 h42 v1.2 h-42z" fill="#000" opacity=".2"/><path d="M55.4 19 h1 v41.8 h-1z" fill="#000" opacity=".12"/><path d="M13.5 6 H43.2 L55.4 18.2 V60 H13.5Z" fill="#fbfbfb" stroke="#979da4" stroke-width="0.8"/><path d="M13.9 6.4 H43 V16 H13.9Z" fill="url(#gDocHead)"/><text x="36.2" y="53" text-anchor="middle" class="biga">a</text><path d="M18 21.3 H52" stroke="#9c9c9c" stroke-width="0.6" stroke-dasharray="3 0.6 5 0.5 2 0.7 6 0.4 1.5 0.5" opacity=".62"/><path d="M18 24.7 H52" stroke="#9c9c9c" stroke-width="0.6" stroke-dasharray="3 0.6 5 0.5 2 0.7 6 0.4 1.5 0.5" opacity=".62"/><path d="M18 28.0 H52" stroke="#9c9c9c" stroke-width="0.6" stroke-dasharray="3 0.6 5 0.5 2 0.7 6 0.4 1.5 0.5" opacity=".62"/><path d="M18 31.4 H52" stroke="#9c9c9c" stroke-width="0.6" stroke-dasharray="3 0.6 5 0.5 2 0.7 6 0.4 1.5 0.5" opacity=".62"/><path d="M18 34.7 H52" stroke="#9c9c9c" stroke-width="0.6" stroke-dasharray="3 0.6 5 0.5 2 0.7 6 0.4 1.5 0.5" opacity=".62"/><path d="M18 38.0 H52" stroke="#9c9c9c" stroke-width="0.6" stroke-dasharray="3 0.6 5 0.5 2 0.7 6 0.4 1.5 0.5" opacity=".62"/><path d="M18 41.4 H52" stroke="#9c9c9c" stroke-width="0.6" stroke-dasharray="3 0.6 5 0.5 2 0.7 6 0.4 1.5 0.5" opacity=".62"/><path d="M18 44.8 H52" stroke="#9c9c9c" stroke-width="0.6" stroke-dasharray="3 0.6 5 0.5 2 0.7 6 0.4 1.5 0.5" opacity=".62"/><path d="M18 48.1 H52" stroke="#9c9c9c" stroke-width="0.6" stroke-dasharray="3 0.6 5 0.5 2 0.7 6 0.4 1.5 0.5" opacity=".62"/><path d="M18 51.5 H52" stroke="#9c9c9c" stroke-width="0.6" stroke-dasharray="3 0.6 5 0.5 2 0.7 6 0.4 1.5 0.5" opacity=".62"/><path d="M18 54.8 H52" stroke="#9c9c9c" stroke-width="0.6" stroke-dasharray="3 0.6 5 0.5 2 0.7 6 0.4 1.5 0.5" opacity=".62"/><path d="M43.2 6 V15.4 Q43.2 18.2 46 18.2 H55.4 Z" fill="url(#gFoldc)" stroke="#a9aeb4" stroke-width="0.6"/><path d="M43.6 18.8 L55.4 18.2 L55.4 24 Z" fill="#000" opacity=".10"/><path transform="translate(-1.6 -0.6) scale(1.04 1.08)" d="M17.6 8.4 q1.6-0.6 2.2 0.6 l0.6 3.6 q0.2 0.8 0.8 0.2 l0.2-4 h1.6 l0.4 3.8 q0.2 0.8 0.8 0.2 q0.9-1.8-0.2-4.2 q1.8 0 1.8 2 q0 3.4-2.6 3.8 q-1.2 0-1.5-1 q-0.6 1-1.8 1 q-1.2-0.1-1.4-1.4 l-0.5-3.4 q-0.1-0.8-0.9-0.7z" fill="#fff"/><rect x="6.6" y="47.6" width="28.6" height="9.8" rx="4.9" fill="#000" opacity=".22" transform="translate(0.4 0.9)"/><rect x="6.6" y="47.6" width="28.6" height="9.8" rx="4.9" fill="url(#gPill)" stroke="#9fb6d2" stroke-width="0.6"/><text x="20.9" y="55.2" text-anchor="middle" class="docx">DOCX</text></svg>
<div class="lab sel" style="left:487px;top:235px"><span><b style="letter-spacing:-0.321px">DesigningUsableBusine</b><b style="letter-spacing:-0.095px">ssApplicat…2007.docx</b></span></div>
<svg class="big" style="left:241px;top:274px" width="68" height="68" viewBox="0 0 68 68"><path d="M14 60.4 h42 v1.2 h-42z" fill="#000" opacity=".2"/><path d="M55.4 19 h1 v41.8 h-1z" fill="#000" opacity=".12"/><path d="M13.5 6 H43.2 L55.4 18.2 V60 H13.5Z" fill="#fbfbfb" stroke="#979da4" stroke-width="0.8"/><path d="M13.9 6.4 H43 V16 H13.9Z" fill="url(#gDocHead)"/><text x="36.2" y="53" text-anchor="middle" class="biga">a</text><path d="M18 21.3 H52" stroke="#9c9c9c" stroke-width="0.6" stroke-dasharray="3 0.6 5 0.5 2 0.7 6 0.4 1.5 0.5" opacity=".62"/><path d="M18 24.7 H52" stroke="#9c9c9c" stroke-width="0.6" stroke-dasharray="3 0.6 5 0.5 2 0.7 6 0.4 1.5 0.5" opacity=".62"/><path d="M18 28.0 H52" stroke="#9c9c9c" stroke-width="0.6" stroke-dasharray="3 0.6 5 0.5 2 0.7 6 0.4 1.5 0.5" opacity=".62"/><path d="M18 31.4 H52" stroke="#9c9c9c" stroke-width="0.6" stroke-dasharray="3 0.6 5 0.5 2 0.7 6 0.4 1.5 0.5" opacity=".62"/><path d="M18 34.7 H52" stroke="#9c9c9c" stroke-width="0.6" stroke-dasharray="3 0.6 5 0.5 2 0.7 6 0.4 1.5 0.5" opacity=".62"/><path d="M18 38.0 H52" stroke="#9c9c9c" stroke-width="0.6" stroke-dasharray="3 0.6 5 0.5 2 0.7 6 0.4 1.5 0.5" opacity=".62"/><path d="M18 41.4 H52" stroke="#9c9c9c" stroke-width="0.6" stroke-dasharray="3 0.6 5 0.5 2 0.7 6 0.4 1.5 0.5" opacity=".62"/><path d="M18 44.8 H52" stroke="#9c9c9c" stroke-width="0.6" stroke-dasharray="3 0.6 5 0.5 2 0.7 6 0.4 1.5 0.5" opacity=".62"/><path d="M18 48.1 H52" stroke="#9c9c9c" stroke-width="0.6" stroke-dasharray="3 0.6 5 0.5 2 0.7 6 0.4 1.5 0.5" opacity=".62"/><path d="M18 51.5 H52" stroke="#9c9c9c" stroke-width="0.6" stroke-dasharray="3 0.6 5 0.5 2 0.7 6 0.4 1.5 0.5" opacity=".62"/><path d="M18 54.8 H52" stroke="#9c9c9c" stroke-width="0.6" stroke-dasharray="3 0.6 5 0.5 2 0.7 6 0.4 1.5 0.5" opacity=".62"/><path d="M43.2 6 V15.4 Q43.2 18.2 46 18.2 H55.4 Z" fill="url(#gFoldc)" stroke="#a9aeb4" stroke-width="0.6"/><path d="M43.6 18.8 L55.4 18.2 L55.4 24 Z" fill="#000" opacity=".10"/><path transform="translate(-1.6 -0.6) scale(1.04 1.08)" d="M17.6 8.4 q1.6-0.6 2.2 0.6 l0.6 3.6 q0.2 0.8 0.8 0.2 l0.2-4 h1.6 l0.4 3.8 q0.2 0.8 0.8 0.2 q0.9-1.8-0.2-4.2 q1.8 0 1.8 2 q0 3.4-2.6 3.8 q-1.2 0-1.5-1 q-0.6 1-1.8 1 q-1.2-0.1-1.4-1.4 l-0.5-3.4 q-0.1-0.8-0.9-0.7z" fill="#fff"/><rect x="6.6" y="47.6" width="28.6" height="9.8" rx="4.9" fill="#000" opacity=".22" transform="translate(0.4 0.9)"/><rect x="6.6" y="47.6" width="28.6" height="9.8" rx="4.9" fill="url(#gPill)" stroke="#9fb6d2" stroke-width="0.6"/><text x="20.9" y="55.2" text-anchor="middle" class="docx">DOCX</text></svg>
<div class="lab" style="left:175px;top:343px"><span><b style="letter-spacing:-0.321px">DesigningUsableBusine</b><b style="letter-spacing:-0.095px">ssApplicat…2012.docx</b></span></div>
<svg class="big" style="left:397px;top:274px" width="68" height="68" viewBox="0 0 68 68"><rect x="0" y="0" width="68" height="68" rx="2.6" fill="#c1c1c1"/><path d="M13 60.6 h43 v1.2 h-43z" fill="#000" opacity=".18"/><path d="M12.5 5.3 H42 L55.7 19 V60.3 H12.5Z" fill="url(#gPage)" stroke="#a4a4a4" stroke-width="0.8"/><path d="M42 19.6 L55.7 19 L55.7 26 Z" fill="#000" opacity=".10"/><path d="M42 5.3 V16 Q42 19 45 19 H55.7 Z" fill="url(#gFoldc)" stroke="#b8b8b8" stroke-width="0.6"/><g transform="translate(20.6 22.4) rotate(-9)"><rect x="0" y="0" width="22.5" height="15" fill="#f6f1e4" stroke="#b9b2a0" stroke-width="0.5"/><rect x="1.2" y="1.2" width="20.1" height="12.6" fill="#c4a874"/><path d="M1.2 4 q4-2.6 8 0.4 q4 2 7-1 q3-1.4 5.1 0.6 v-2.8 h-20.1z" fill="#a88c58" opacity=".8"/></g><g transform="translate(18.6 31) rotate(-25)"><rect x="0.5" y="0.9" width="24" height="18.6" fill="#000" opacity=".22"/><rect x="0" y="0" width="24" height="18.6" fill="#fdfdfd" stroke="#a2a6ac" stroke-width="0.5"/><rect x="1.4" y="1.4" width="21.2" height="15.8" fill="url(#gSky)"/><rect x="1.4" y="8.6" width="21.2" height="2.4" fill="#2a4cac"/><rect x="1.4" y="11" width="21.2" height="6.2" fill="#cfdcf4"/><path d="M6.2 17.2 q-0.4-5.4 2.6-7 q-1.8-1-1.6-3.4 q0.4-3 3.4-3 q3 0.2 3 3.4 q0 2-1.4 3 q3.6 1.4 3.8 7z" fill="#1e1c1e"/><ellipse cx="10.7" cy="7.2" rx="1.9" ry="2.1" fill="#b98a68"/><path d="M8.4 6.4 q0.4-2.6 2.6-2.4 q2.2 0.2 2.2 2.6 q-1.2-1.4-2.4-1 q-1.4 0-2.4 0.8z" fill="#16120e"/><path d="M9.8 11.4 l1 2.6 l1.4-2.6z" fill="#d8d4d0"/></g><ellipse cx="45" cy="43.6" rx="6" ry="2.2" fill="#000" opacity=".18"/><ellipse cx="44.4" cy="42" rx="5.9" ry="3.1" fill="#f0f2f4" stroke="#808488" stroke-width="0.6"/><ellipse cx="44.4" cy="41.2" rx="4.4" ry="2.1" fill="#b4b8bc"/><ellipse cx="44.4" cy="40.6" rx="3.9" ry="1.7" fill="#e6e8ea"/><path d="M39.2 33.6 L40.5 38.6 a3.8 1.6 0 0 0 7.6 0 L49.3 33.6z" fill="#121212"/><ellipse cx="44.2" cy="33.3" rx="5.2" ry="4.5" fill="#181818"/><ellipse cx="44.2" cy="32.7" rx="3.5" ry="2.7" fill="#dce5f6"/><ellipse cx="43.7" cy="32.1" rx="2.2" ry="1.4" fill="#ffffff" opacity=".9"/><path d="M40.4 36.6 q3.8 2.2 7.8 0" stroke="#6a6e74" stroke-width="0.7" fill="none"/><text x="34.8" y="57.7" text-anchor="middle" class="ext">GIF</text></svg>
<div class="lab sel one" style="left:331px;top:343px"><span><b style="letter-spacing:-0.331px">home.gif</b></span></div>
<svg class="big" style="left:553px;top:274px" width="68" height="68" viewBox="0 0 68 68"><rect x="0" y="0" width="68" height="68" rx="2.6" fill="#c1c1c1"/><path d="M13 60.6 h43 v1.2 h-43z" fill="#000" opacity=".18"/><path d="M12.5 5.3 H42 L55.7 19 V60.3 H12.5Z" fill="url(#gPage)" stroke="#a4a4a4" stroke-width="0.8"/><path d="M42 19.6 L55.7 19 L55.7 26 Z" fill="#000" opacity=".10"/><path d="M42 5.3 V16 Q42 19 45 19 H55.7 Z" fill="url(#gFoldc)" stroke="#b8b8b8" stroke-width="0.6"/><g transform="translate(20.6 22.4) rotate(-9)"><rect x="0" y="0" width="22.5" height="15" fill="#f6f1e4" stroke="#b9b2a0" stroke-width="0.5"/><rect x="1.2" y="1.2" width="20.1" height="12.6" fill="#c4a874"/><path d="M1.2 4 q4-2.6 8 0.4 q4 2 7-1 q3-1.4 5.1 0.6 v-2.8 h-20.1z" fill="#a88c58" opacity=".8"/></g><g transform="translate(18.6 31) rotate(-25)"><rect x="0.5" y="0.9" width="24" height="18.6" fill="#000" opacity=".22"/><rect x="0" y="0" width="24" height="18.6" fill="#fdfdfd" stroke="#a2a6ac" stroke-width="0.5"/><rect x="1.4" y="1.4" width="21.2" height="15.8" fill="url(#gSky)"/><rect x="1.4" y="8.6" width="21.2" height="2.4" fill="#2a4cac"/><rect x="1.4" y="11" width="21.2" height="6.2" fill="#cfdcf4"/><path d="M6.2 17.2 q-0.4-5.4 2.6-7 q-1.8-1-1.6-3.4 q0.4-3 3.4-3 q3 0.2 3 3.4 q0 2-1.4 3 q3.6 1.4 3.8 7z" fill="#1e1c1e"/><ellipse cx="10.7" cy="7.2" rx="1.9" ry="2.1" fill="#b98a68"/><path d="M8.4 6.4 q0.4-2.6 2.6-2.4 q2.2 0.2 2.2 2.6 q-1.2-1.4-2.4-1 q-1.4 0-2.4 0.8z" fill="#16120e"/><path d="M9.8 11.4 l1 2.6 l1.4-2.6z" fill="#d8d4d0"/></g><ellipse cx="45" cy="43.6" rx="6" ry="2.2" fill="#000" opacity=".18"/><ellipse cx="44.4" cy="42" rx="5.9" ry="3.1" fill="#f0f2f4" stroke="#808488" stroke-width="0.6"/><ellipse cx="44.4" cy="41.2" rx="4.4" ry="2.1" fill="#b4b8bc"/><ellipse cx="44.4" cy="40.6" rx="3.9" ry="1.7" fill="#e6e8ea"/><path d="M39.2 33.6 L40.5 38.6 a3.8 1.6 0 0 0 7.6 0 L49.3 33.6z" fill="#121212"/><ellipse cx="44.2" cy="33.3" rx="5.2" ry="4.5" fill="#181818"/><ellipse cx="44.2" cy="32.7" rx="3.5" ry="2.7" fill="#dce5f6"/><ellipse cx="43.7" cy="32.1" rx="2.2" ry="1.4" fill="#ffffff" opacity=".9"/><path d="M40.4 36.6 q3.8 2.2 7.8 0" stroke="#6a6e74" stroke-width="0.7" fill="none"/><text x="34.8" y="57.7" text-anchor="middle" class="ext">GIF</text></svg>
<div class="lab sel one" style="left:487px;top:343px"><span><b style="letter-spacing:-0.015px">logout.gif</b></span></div>
<div id="path"></div>
<div class="pi" style="left:206.4px;top:407.8px"><svg width="15" height="15" viewBox="0 0 16 16"><path d="M1.9 0.5 H13.9 L14.7 11.4 V15.2 H1 V11.4Z" fill="url(#gHD)" stroke="#707070" stroke-width="0.7"/><path d="M2.3 0.9 H13.5 L13.8 4.6 H2Z" fill="#dcdcdc" opacity=".85"/><rect x="3.8" y="2.3" width="7.2" height="0.9" fill="#2e2e2e"/><ellipse cx="7.8" cy="8.4" rx="2.6" ry="1.2" fill="#cfcfcf" opacity=".8"/><path d="M1.4 11.3 H14.3 V13.2 H1.4Z" fill="#c4c4c4" opacity=".9"/><rect x="1.2" y="13.2" width="13.3" height="1.9" fill="#1c1c1c"/><rect x="1.4" y="13.2" width="4.8" height="0.8" fill="#9a9a9a"/><rect x="8" y="13.3" width="0.6" height="1.6" fill="#b8b8b8"/><rect x="9.9" y="13.3" width="0.6" height="1.6" fill="#b8b8b8"/><rect x="11.8" y="13.3" width="0.6" height="1.6" fill="#b8b8b8"/><rect x="12.7" y="12.9" width="1.5" height="1.5" fill="#f6ea1c"/></svg></div>
<div class="pt" style="left:225.9px;letter-spacing:-0.209px">Macintosh HD</div>
<div class="pa" style="left:306.5px"></div>
<div class="pi" style="left:317.2px;top:408.6px"><svg width="16" height="14" viewBox="0 0 16 14"><path d="M0.5 2 q0-1 1-1 h4.2 q0.8 0 1.1 0.7 l0.3 0.8 h7.4 q1 0 1 1 v9 q0 1-1 1 h-13 q-1 0-1-1z" fill="url(#gFolder)" stroke="#4f7cac" stroke-width="1"/><path d="M1.2 4.3 h13.6" stroke="#d3e4f4" stroke-width="0.8"/><circle cx="8" cy="6.6" r="1.8" fill="#4f7fb3"/><path d="M4.6 11.6 q0-2.8 3.4-2.8 q3.4 0 3.4 2.8z" fill="#4f7fb3"/></svg></div>
<div class="pt" style="left:336.9px;letter-spacing:-0.528px">Users</div>
<div class="pa" style="left:372px"></div>
<div class="pi" style="left:383.8px;top:407.8px"><svg width="16" height="15" viewBox="0 0 16 15"><rect x="11" y="1.2" width="1.8" height="4.5" fill="#e8e2d2" stroke="#6d665a" stroke-width="0.5"/><path d="M3 7 L8 2.2 L13 7 V13.8 H3z" fill="#f6f2e6" stroke="#8a8476" stroke-width="0.6"/><path d="M1.2 8 L8 1.4 L14.8 8" fill="none" stroke="#1c1c1c" stroke-width="1.5" stroke-linejoin="miter"/><rect x="5.9" y="5.6" width="1.2" height="2" fill="#9a2a1a"/><rect x="8.9" y="5.6" width="1.2" height="2" fill="#9a2a1a"/><rect x="6.8" y="9.2" width="2.4" height="4.6" fill="#e8491a" stroke="#7a200a" stroke-width="0.5"/><rect x="2.4" y="13.6" width="11.2" height="0.9" fill="#3a3a3a"/></svg></div>
<div class="pt" style="left:402.7px;letter-spacing:-0.248px">kevin_matz</div>
<div class="pa" style="left:469.5px"></div>
<div class="pi" style="left:480.2px;top:408.6px"><svg width="16" height="14" viewBox="0 0 16 14"><path d="M0.5 2 q0-1 1-1 h4.2 q0.8 0 1.1 0.7 l0.3 0.8 h7.4 q1 0 1 1 v9 q0 1-1 1 h-13 q-1 0-1-1z" fill="url(#gFolder)" stroke="#4f7cac" stroke-width="1"/><path d="M1.2 4.3 h13.6" stroke="#d3e4f4" stroke-width="0.8"/><path d="M5.8 5.2 h3.2 l1.4 1.4 v4.6 h-4.6z" fill="#dbe9f7" stroke="#4f7fb3" stroke-width="0.8"/></svg></div>
<div class="pt" style="left:499.9px;letter-spacing:-0.340px">Documents</div>
<div class="pa" style="left:566px"></div>
<div class="pi" style="left:577.0px;top:408.6px"><svg width="16" height="14" viewBox="0 0 16 14"><path d="M0.5 2 q0-1 1-1 h4.2 q0.8 0 1.1 0.7 l0.3 0.8 h7.4 q1 0 1 1 v9 q0 1-1 1 h-13 q-1 0-1-1z" fill="url(#gFolder)" stroke="#4f7cac" stroke-width="1"/><path d="M1.2 4.3 h13.6" stroke="#d3e4f4" stroke-width="0.8"/></svg></div>
<div class="pt" style="left:597.0px;letter-spacing:-0.260px">My Junk</div>
<div id="status"></div>
<div id="stxt" style="letter-spacing:-0.186px">6 of 9 selected, 280.94 GB available</div>
<svg style="position:absolute;left:0;top:425px" width="30" height="26" viewBox="0 0 30 26"><rect x="8.5" y="8.7" width="3.6" height="4.2" fill="#d0d0d0" opacity=".7"/><rect x="8.5" y="8.9" width="3.6" height="4" fill="#7a7a7a" stroke="#3e3e3e" stroke-width="0.9" transform="skewY(-6)"/><rect x="16.7" y="8.7" width="3.6" height="4.2" fill="#d0d0d0" opacity=".7"/><rect x="16.7" y="9.7" width="3.6" height="4" fill="#7a7a7a" stroke="#3e3e3e" stroke-width="0.9" transform="skewY(-6)"/><rect x="8.5" y="16.7" width="3.6" height="4.2" fill="#d0d0d0" opacity=".7"/><rect x="8.5" y="16.9" width="3.6" height="4" fill="#7a7a7a" stroke="#3e3e3e" stroke-width="0.9" transform="skewY(-6)"/><rect x="16.7" y="16.7" width="3.6" height="4.2" fill="#d0d0d0" opacity=".7"/><rect x="16.7" y="17.7" width="3.6" height="4" fill="#7a7a7a" stroke="#3e3e3e" stroke-width="0.9" transform="skewY(-6)"/></svg>
<div style="position:absolute;left:607.5px;top:437px;width:78px;height:5px;border-radius:3px;background:linear-gradient(#4a4a4a,#7a7a7a);box-shadow:0 1px 0 rgba(255,255,255,.35)"></div>
<div style="position:absolute;left:620.3px;top:433.9px;width:11px;height:11px;border-radius:6px;background:radial-gradient(circle at 50% 50%,#707070 0,#8a8a8a 14%,#f4f4f4 30%,#fdfdfd 60%,#d8d8d8 100%);border:1px solid #555"></div>
<svg style="position:absolute;left:695px;top:436px" width="13" height="13" viewBox="0 0 13 13"><path d="M12 1 L1 12 M12 5 L5 12 M12 9 L9 12" stroke="#555" stroke-width="1"/><path d="M12 2.2 L2.2 12 M12 6.2 L6.2 12 M12 10.2 L10.2 12" stroke="#c8c8c8" stroke-width="0.8"/></svg>
</div></body></html>
